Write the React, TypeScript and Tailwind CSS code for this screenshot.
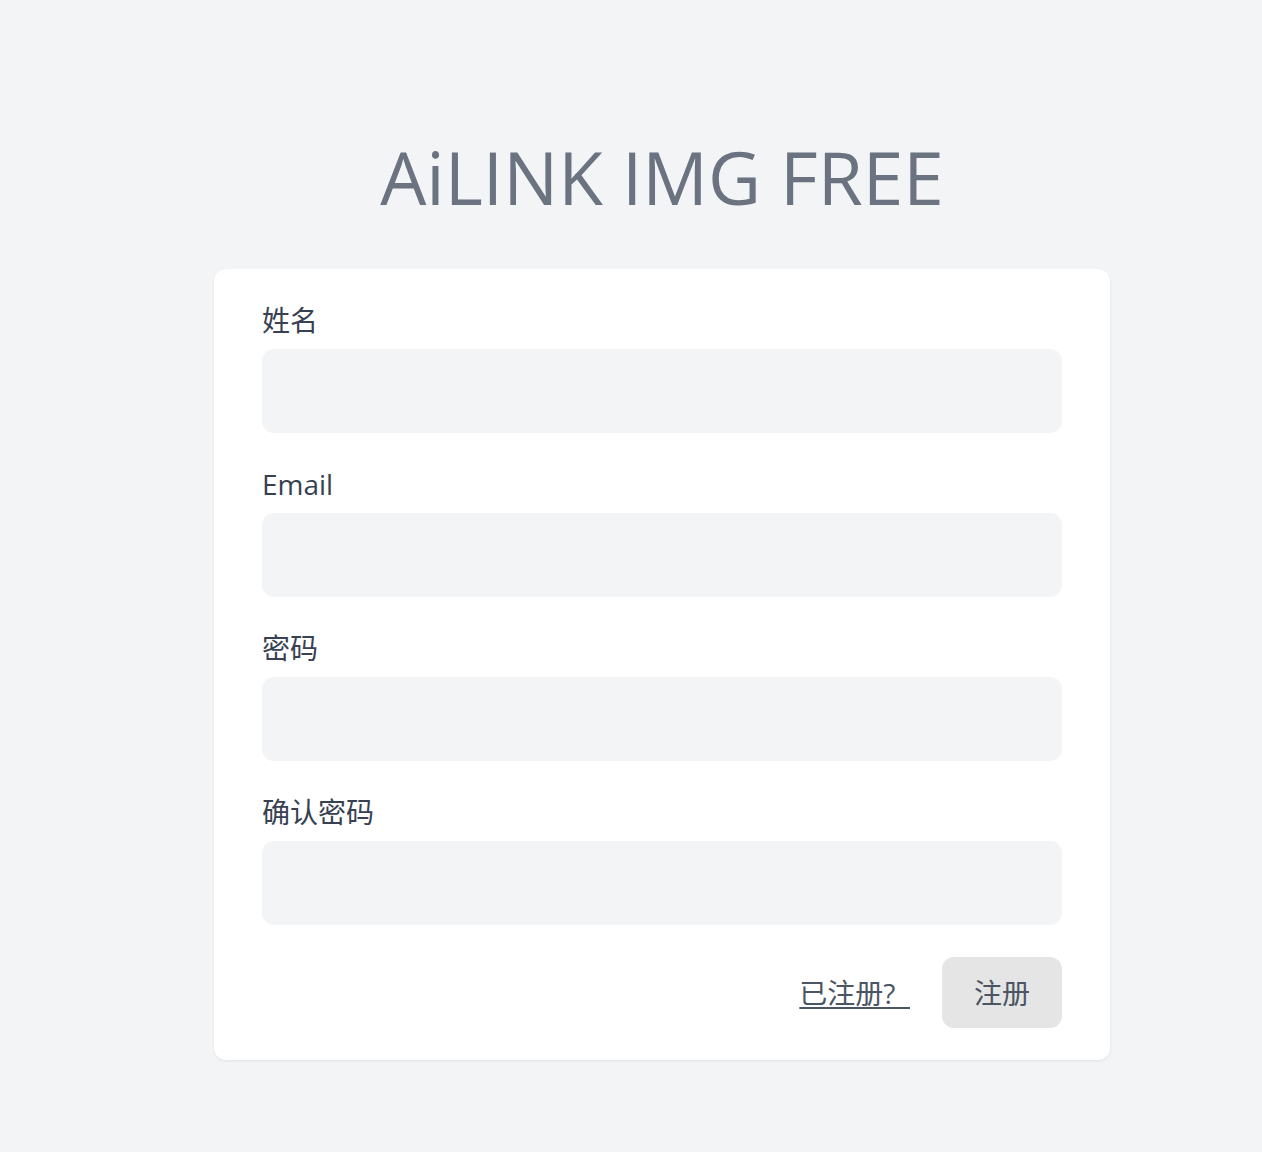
import { useState } from 'react'

const fields = [
  { label: '姓名', type: 'text', name: 'name' },
  { label: 'Email', type: 'email', name: 'email' },
  { label: '密码', type: 'password', name: 'password' },
  { label: '确认密码', type: 'password', name: 'password_confirmation' },
]

export default function App() {
  const [values, setValues] = useState<Record<string, string>>({})

  return (
    <div
      className="min-h-[1152px] w-full bg-[#f3f4f6] text-[#374151]"
      style={{ fontFamily: '"Open Sans", "Noto Sans CJK SC", sans-serif' }}
    >
      <div className="ml-[214px] w-[896px] pt-[129px]">
        <h1 className="text-center text-[73px] leading-[96px] font-normal text-[#6b7280]">
          AiLINK IMG FREE
        </h1>

        <form
          className="mt-[44px] rounded-xl bg-white px-[48px] pt-[34px] pb-[32px] shadow-[0_1px_3px_rgba(0,0,0,0.08)]"
          onSubmit={(e) => e.preventDefault()}
        >
          {fields.map((f, i) => (
            <div key={f.name} className={i > 0 ? 'mt-[34px]' : ''}>
              <label htmlFor={f.name} className="block text-[28px] leading-[34px] text-[#374151]">
                {f.label}
              </label>
              <input
                id={f.name}
                type={f.type}
                value={values[f.name] ?? ''}
                onChange={(e) => setValues({ ...values, [f.name]: e.target.value })}
                className="mt-[12px] block h-[84px] w-full rounded-xl bg-[#f3f4f6] px-4 text-[27px] outline-none"
              />
            </div>
          ))}

          <div className="mt-[32px] flex items-center justify-end">
            <a href="#" className="text-[28px] leading-[36px] text-[#4b5563] underline underline-offset-[3px]">
              已注册?&nbsp;&nbsp;
            </a>
            <button
              type="submit"
              className="ml-[32px] h-[71px] w-[120px] rounded-xl bg-[#e5e5e5] text-[28px] text-[#4b5563]"
            >
              注册
            </button>
          </div>
        </form>
      </div>
    </div>
  )
}
